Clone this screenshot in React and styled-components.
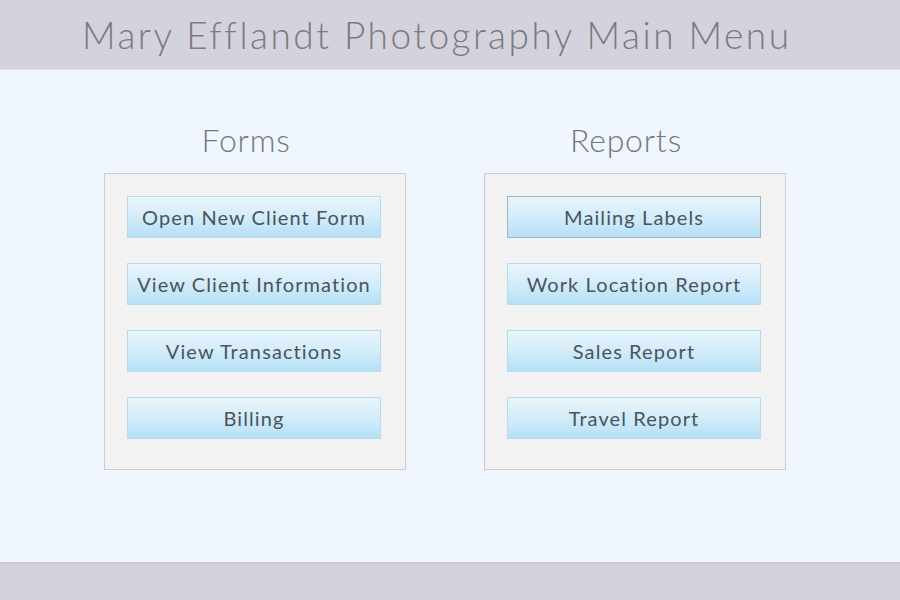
import React from "react"
import styled, { createGlobalStyle } from "styled-components"

const GlobalStyle = createGlobalStyle`
  html, body {
    margin: 0;
    padding: 0;
    height: 100%;
  }
  body {
    font-family: "Lato", "Open Sans", sans-serif;
    background: #eff6fd;
  }
  #root {
    height: 100%;
  }
`

const Page = styled.div`
  display: flex;
  flex-direction: column;
  width: 900px;
  height: 600px;
  overflow: hidden;
`

const Header = styled.header`
  flex: 0 0 70px;
  display: flex;
  align-items: center;
  padding-left: 82px;
  background: #d3d2dd;
  border-bottom: 1px solid #dcdde6;
  box-sizing: border-box;
`

const Title = styled.h1`
  margin: 0;
  font-weight: 300;
  font-size: 37px;
  letter-spacing: 2.5px;
  color: #7b7b80;
`

const Body = styled.main`
  flex: 1;
  display: flex;
  gap: 78px;
  padding: 50px 0 0 104px;
  background: #eff6fd;
`

const Column = styled.section`
  display: flex;
  flex-direction: column;
  align-items: center;
`

const Heading = styled.h2`
  margin: 0 18px 14px 0;
  height: 39px;
  font-weight: 300;
  font-size: 32px;
  line-height: 39px;
  letter-spacing: 0.8px;
  color: #76777c;
`

const Panel = styled.div`
  display: flex;
  flex-direction: column;
  gap: 25px;
  width: 302px;
  height: 297px;
  box-sizing: border-box;
  padding: 22px 25px 0 22px;
  background: #f2f2f2;
  border: 1px solid #cbcbd0;
`

const MenuButton = styled.button`
  height: 42px;
  width: 254px;
  padding: 0;
  border: 1px solid ${p => (p.$active ? "#9fb8c8" : "#b9dbee")};
  background: linear-gradient(to bottom, #e9f5fc 0%, #d3ecf9 50%, #b5e0f6 100%);
  font-family: "Lato", "Open Sans", sans-serif;
  font-size: 20px;
  letter-spacing: 1.1px;
  color: #4a545f;
  cursor: pointer;
`

const Footer = styled.footer`
  flex: 0 0 38px;
  background: #d3d2dd;
  border-top: 2px solid #cdccd8;
  box-sizing: border-box;
`

const forms = [
  "Open New Client Form",
  "View Client Information",
  "View Transactions",
  "Billing",
]

const reports = [
  "Mailing Labels",
  "Work Location Report",
  "Sales Report",
  "Travel Report",
]

export default function App() {
  return (
    <>
      <GlobalStyle />
      <Page>
        <Header>
          <Title>Mary Efflandt Photography Main Menu</Title>
        </Header>
        <Body>
          <Column>
            <Heading>Forms</Heading>
            <Panel>
              {forms.map(label => (
                <MenuButton key={label}>{label}</MenuButton>
              ))}
            </Panel>
          </Column>
          <Column>
            <Heading>Reports</Heading>
            <Panel>
              {reports.map((label, i) => (
                <MenuButton key={label} $active={i === 0}>
                  {label}
                </MenuButton>
              ))}
            </Panel>
          </Column>
        </Body>
        <Footer />
      </Page>
    </>
  )
}
